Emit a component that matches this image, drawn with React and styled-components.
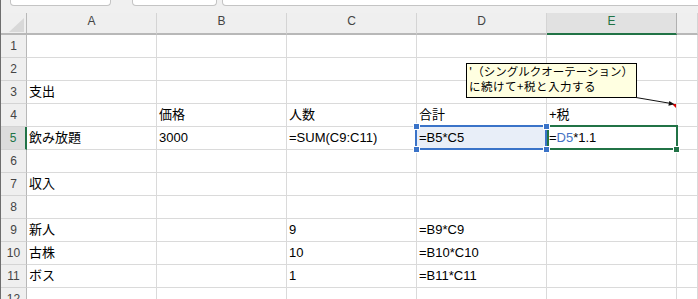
import styled, { createGlobalStyle } from "styled-components";

const GlobalStyle = createGlobalStyle`
  html, body {
    margin: 0;
    padding: 0;
    background: #ffffff;
    overflow: hidden;
  }
  body {
    font-family: "Liberation Sans", "Noto Sans CJK JP", sans-serif;
  }
`;

const COLS = ["A", "B", "C", "D", "E"];

const ROWS = [
  {},
  {},
  { A: "支出" },
  { B: "価格", C: "人数", D: "合計", E: "+税" },
  { A: "飲み放題", B: "3000", C: "=SUM(C9:C11)", D: "=B5*C5", E: "editing" },
  {},
  { A: "収入" },
  {},
  { A: "新人", C: "9", D: "=B9*C9" },
  { A: "古株", C: "10", D: "=B10*C10" },
  { A: "ボス", C: "1", D: "=B11*C11" },
  {},
];

const ACTIVE_ROW = 5;
const ACTIVE_COL = "E";

function App() {
  return (
    <Window>
      <GlobalStyle />
      <TopStrip>
        <TopBox $width={101} />
        <TopBox $width={85} $gap={21} />
        <TopBox $gap={5} $grow />
      </TopStrip>
      <Sheet>
        <Corner />
        {COLS.map((c) => (
          <ColHeader key={c} $active={c === ACTIVE_COL}>
            {c}
          </ColHeader>
        ))}
        <ColHeader />
        {ROWS.map((row, i) => {
          const n = i + 1;
          return [
            <RowHeader key={`h${n}`} $active={n === ACTIVE_ROW}>
              {n}
            </RowHeader>,
            ...COLS.map((c) => (
              <Cell key={`${c}${n}`} $fill={n === 5 && c === "D" ? "#e8eef8" : "#fff"}>
                {row[c] === "editing" ? (
                  <>
                    =<Ref>D5</Ref>*1.1
                  </>
                ) : (
                  row[c]
                )}
              </Cell>
            )),
            <Cell key={`F${n}`} />,
          ];
        })}
      </Sheet>

      <ActiveBox />
      <RefBox />
      <Handle $color="#3a73c8" style={{ left: 413, top: 124 }} />
      <Handle $color="#3a73c8" style={{ left: 543, top: 124 }} />
      <Handle $color="#3a73c8" style={{ left: 413, top: 147 }} />
      <Handle $color="#3a73c8" style={{ left: 543, top: 147 }} />
      <Handle $color="#217346" style={{ left: 673, top: 147 }} />

      <Comment>
        <CommentLine>'（シングルクオーテーション）</CommentLine>
        <CommentLine $spacing={0.5}>に続けて+税と入力する</CommentLine>
      </Comment>
      <Pointer width="56" height="20" viewBox="0 0 56 20">
        <polygon points="41,12 45,12 45,16" fill="#e00000" />
        <line x1="5" y1="5.5" x2="39" y2="11.3" stroke="#111" strokeWidth="1" />
        <polygon points="43.5,12.2 37.4,13.8 38.3,8.9" fill="#111" />
      </Pointer>
    </Window>
  );
}

const Window = styled.div`
  position: relative;
  height: 299px;
  overflow: hidden;
  border-left: 1px solid #6e6e6e;
  background: #ffffff;
`;

const TopStrip = styled.div`
  display: flex;
  align-items: flex-start;
  height: 13px;
  padding-left: 9px;
  background: #f0f0f0;
`;

const TopBox = styled.div`
  box-sizing: border-box;
  height: 6px;
  width: ${(p) => (p.$width ? `${p.$width}px` : "auto")};
  flex: ${(p) => (p.$grow ? "1" : "none")};
  margin-left: ${(p) => p.$gap || 0}px;
  margin-right: ${(p) => (p.$grow ? "-10px" : "0")};
  background: #ffffff;
  border: 1px solid #c4c4c4;
  border-top: none;
  border-radius: 0 0 4px 4px;
`;

const Sheet = styled.div`
  display: grid;
  grid-template-columns: 26px repeat(5, 130px) 1fr;
  grid-template-rows: 22px;
  grid-auto-rows: 23px;
`;

const Corner = styled.div`
  position: relative;
  box-sizing: border-box;
  background: #efefef;
  border-right: 1px solid #b8b8b8;
  border-bottom: 2px solid #b8b8b8;
  &::after {
    content: "";
    position: absolute;
    left: 8px;
    top: 5px;
    width: 15px;
    height: 14px;
    background: #d8d8d8;
    clip-path: polygon(100% 0, 100% 100%, 0 100%);
  }
`;

const ColHeader = styled.div`
  box-sizing: border-box;
  background: ${(p) => (p.$active ? "#e1e1e1" : "#efefef")};
  color: ${(p) => (p.$active ? "#217346" : "#444444")};
  border-right: 1px solid ${(p) => (p.$active ? "#b0b0b0" : "#d4d4d4")};
  border-bottom: 2px solid ${(p) => (p.$active ? "#217346" : "#b8b8b8")};
  font-size: 12px;
  line-height: 16px;
  text-align: center;
`;

const RowHeader = styled.div`
  box-sizing: border-box;
  background: ${(p) => (p.$active ? "#dcdcdc" : "#efefef")};
  color: ${(p) => (p.$active ? "#217346" : "#444444")};
  border-right: ${(p) => (p.$active ? "2px solid #217346" : "1px solid #b8b8b8")};
  border-bottom: 1px solid #d4d4d4;
  font-size: 12px;
  line-height: 22px;
  text-align: center;
`;

const Cell = styled.div`
  box-sizing: border-box;
  background: ${(p) => p.$fill || "#ffffff"};
  border-right: 1px solid #dadada;
  border-bottom: 1px solid #dadada;
  padding: 0 2px;
  font-size: 13px;
  line-height: 22px;
  color: #000000;
  white-space: nowrap;
`;

const Ref = styled.span`
  color: #4472c4;
`;

const RefBox = styled.div`
  position: absolute;
  left: 414px;
  top: 125px;
  width: 132px;
  height: 25px;
  box-sizing: border-box;
  border: 2px solid #3a73c8;
`;

const ActiveBox = styled.div`
  position: absolute;
  left: 546px;
  top: 125px;
  width: 131px;
  height: 25px;
  box-sizing: border-box;
  border: 2px solid #217346;
`;

const Handle = styled.div`
  position: absolute;
  width: 5px;
  height: 5px;
  background: ${(p) => p.$color};
  box-shadow: 0 0 0 1px #ffffff;
`;

const Comment = styled.div`
  position: absolute;
  left: 465px;
  top: 63px;
  width: 171px;
  height: 35px;
  box-sizing: border-box;
  border: 1px solid #000000;
  background: #ffffe1;
  padding: 0 2px;
  display: flex;
  flex-direction: column;
  font-family: "Noto Sans CJK JP", sans-serif;
  font-size: 11.5px;
  color: #000000;
  white-space: nowrap;
`;

const CommentLine = styled.div`
  height: 15px;
  line-height: 14px;
  letter-spacing: ${(p) => p.$spacing || 0}px;
`;

const Pointer = styled.svg`
  position: absolute;
  left: 630px;
  top: 92px;
`;

export default App;
